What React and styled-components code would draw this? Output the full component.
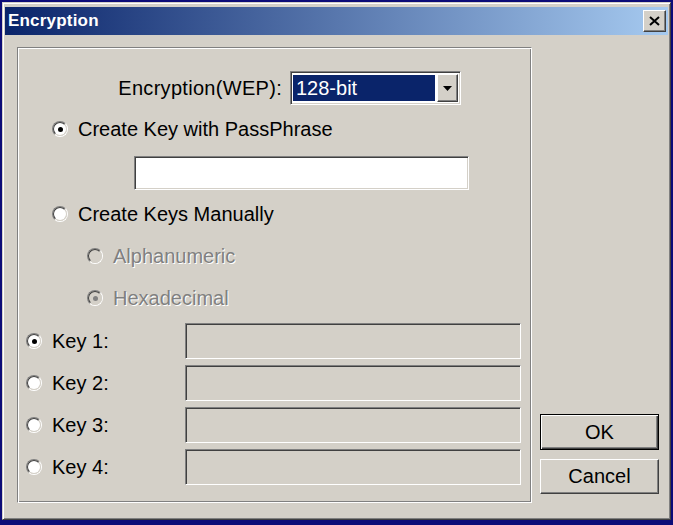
import styled, { createGlobalStyle } from "styled-components";

const GlobalStyle = createGlobalStyle`
  html, body {
    margin: 0;
    padding: 0;
    background: #0c0c78;
  }
  body {
    font-family: "Liberation Sans", Arial, sans-serif;
    font-size: 20px;
    color: #000;
  }
`;

const Window = styled.div`
  box-sizing: border-box;
  width: 669px;
  height: 518px;
  margin: 2px 2px 5px 2px;
  padding: 2px;
  display: flex;
  flex-direction: column;
  background: #d4d0c8;
  border: 1px solid;
  border-color: #d4d0c8 #404040 #404040 #d4d0c8;
  box-shadow: inset 1px 1px #fff, inset -1px -1px #808080;
`;

const TitleBar = styled.div`
  height: 28px;
  margin: 2px 0 0 0;
  display: flex;
  align-items: center;
  justify-content: space-between;
  padding: 0 2px 0 3px;
  background: linear-gradient(to right, #0a246a, #a6caf0);
`;

const TitleText = styled.span`
  color: #fff;
  font-weight: bold;
  font-size: 17px;
  letter-spacing: 0.2px;
`;

const Raised = styled.div`
  box-sizing: border-box;
  background: #d4d0c8;
  border: 1px solid;
  border-color: #fff #404040 #404040 #fff;
  box-shadow: inset -1px -1px #808080;
`;

const CloseButton = styled(Raised)`
  width: 23px;
  height: 22px;
  display: flex;
  align-items: center;
  justify-content: center;
`;

const Content = styled.div`
  flex: 1;
  display: flex;
  gap: 8px;
  padding: 12px 6px 14px 12px;
`;

const GroupBox = styled.div`
  box-sizing: border-box;
  width: 515px;
  display: flex;
  flex-direction: column;
  border: 1px solid;
  border-color: #808080 #fff #fff #808080;
  box-shadow: inset 1px 1px #fff, inset -1px -1px #808080;
  padding: 1px;
`;

const WepRow = styled.div`
  display: grid;
  grid-template-columns: 263px 171px;
  column-gap: 8px;
  align-items: center;
  margin-top: 22px;
`;

const Label = styled.span`
  text-align: ${(p) => (p.$right ? "right" : "left")};
  white-space: nowrap;
  letter-spacing: ${(p) => p.$spacing || 0}px;
`;

const Sunken = styled.div`
  box-sizing: border-box;
  border: 1px solid;
  border-color: #808080 #fff #fff #808080;
  box-shadow: inset 1px 1px #404040, inset -1px -1px #d4d0c8;
`;

const Combo = styled(Sunken)`
  height: 34px;
  background: #fff;
  padding: 2px;
  display: flex;
  gap: 2px;
`;

const ComboValue = styled.div`
  flex: 1;
  display: flex;
  align-items: center;
  padding-left: 3px;
  margin: 1px 0;
  background: #0a246a;
  color: #fff;
`;

const ArrowButton = styled(Raised)`
  width: 21px;
  display: flex;
  align-items: center;
  justify-content: center;
`;

const RadioRow = styled.label`
  display: flex;
  align-items: center;
  gap: 10px;
  height: 24px;
  margin-top: ${(p) => p.$top || 0}px;
  padding-left: ${(p) => p.$indent || 0}px;
  color: ${(p) => (p.$disabled ? "#808080" : "#000")};
  text-shadow: ${(p) => (p.$disabled ? "1px 1px 0 #fff" : "none")};
`;

const RadioOuter = styled.span`
  box-sizing: border-box;
  width: 16px;
  height: 16px;
  flex: none;
  border-radius: 50%;
  border: 1px solid;
  border-color: #808080 #fff #fff #808080;
  text-shadow: none;
`;

const RadioInner = styled.span`
  box-sizing: border-box;
  width: 100%;
  height: 100%;
  display: flex;
  align-items: center;
  justify-content: center;
  border-radius: 50%;
  border: 1px solid;
  border-color: #404040 #d4d0c8 #d4d0c8 #404040;
  background: ${(p) => (p.$disabled ? "#d4d0c8" : "#fff")};
`;

const RadioDot = styled.span`
  width: 5px;
  height: 5px;
  border-radius: 50%;
  background: ${(p) => (p.$disabled ? "#808080" : "#000")};
`;

const TextBox = styled(Sunken)`
  height: ${(p) => p.$h || 34}px;
  background: ${(p) => (p.$disabled ? "#d4d0c8" : "#fff")};
`;

const PassBox = styled(TextBox)`
  width: 335px;
  margin: 15px 0 0 115px;
`;

const KeyList = styled.div`
  display: flex;
  flex-direction: column;
  gap: 6px;
  margin-top: 13px;
`;

const KeyRow = styled.div`
  display: grid;
  grid-template-columns: 166px 336px;
  align-items: center;
`;

const ButtonColumn = styled.div`
  display: flex;
  flex-direction: column;
  justify-content: flex-end;
  gap: 9px;
  padding-bottom: 9px;
`;

const PushButton = styled(Raised)`
  width: 119px;
  height: 35px;
  display: flex;
  align-items: center;
  justify-content: center;
  ${(p) =>
    p.$default &&
    `
    height: 36px;
    border: 1px solid #000;
    box-shadow: inset 1px 1px #fff, inset -1px -1px #404040, inset -2px -2px #808080;
  `}
`;

const Radio = ({ checked, disabled }) => (
  <RadioOuter>
    <RadioInner $disabled={disabled}>
      {checked && <RadioDot $disabled={disabled} />}
    </RadioInner>
  </RadioOuter>
);

const keys = ["Key 1:", "Key 2:", "Key 3:", "Key 4:"];

export default function App() {
  return (
    <>
      <GlobalStyle />
      <Window>
        <TitleBar>
          <TitleText>Encryption</TitleText>
          <CloseButton>
            <svg width="11" height="10" viewBox="0 0 11 10">
              <path d="M1 1 L10 9 M10 1 L1 9" stroke="#000" strokeWidth="2" />
            </svg>
          </CloseButton>
        </TitleBar>
        <Content>
          <GroupBox>
            <WepRow>
              <Label $right $spacing={0.3}>Encryption(WEP):</Label>
              <Combo>
                <ComboValue>128-bit</ComboValue>
                <ArrowButton>
                  <svg width="9" height="5" viewBox="0 0 9 5">
                    <path d="M0 0 H9 L4.5 5 Z" fill="#000" />
                  </svg>
                </ArrowButton>
              </Combo>
            </WepRow>
            <RadioRow $top={12} $indent={33}>
              <Radio checked />
              Create Key with PassPhrase
            </RadioRow>
            <PassBox />
            <RadioRow $top={12} $indent={33}>
              <Radio />
              Create Keys Manually
            </RadioRow>
            <RadioRow $top={18} $indent={68} $disabled>
              <Radio disabled />
              Alphanumeric
            </RadioRow>
            <RadioRow $top={18} $indent={68} $disabled>
              <Radio checked disabled />
              Hexadecimal
            </RadioRow>
            <KeyList>
              {keys.map((k, i) => (
                <KeyRow key={k}>
                  <RadioRow $indent={7}>
                    <Radio checked={i === 0} />
                    {k}
                  </RadioRow>
                  <TextBox $h={36} $disabled />
                </KeyRow>
              ))}
            </KeyList>
          </GroupBox>
          <ButtonColumn>
            <PushButton $default>OK</PushButton>
            <PushButton>Cancel</PushButton>
          </ButtonColumn>
        </Content>
      </Window>
    </>
  );
}
